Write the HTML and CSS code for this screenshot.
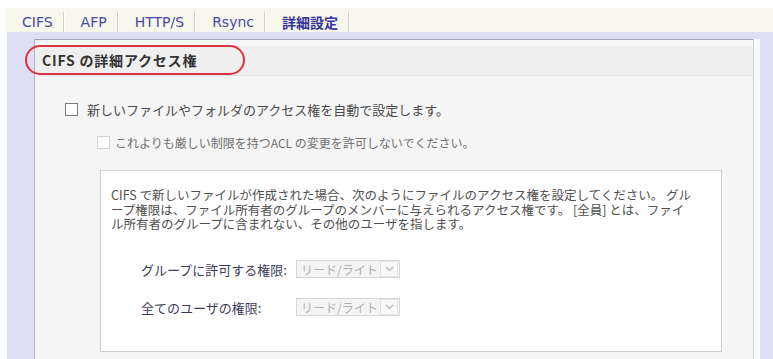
FILE: index.html
```html
<!DOCTYPE html>
<html lang="ja">
  <head>
    <meta charset="utf-8" />
    <title>CIFS の詳細アクセス権</title>
    <link rel="stylesheet" href="styles.css">
  </head>
  <body>
    <div class="tabs">
      <span class="tab">CIFS</span>
      <span class="tab">AFP</span>
      <span class="tab">HTTP/S</span>
      <span class="tab">Rsync</span>
      <span class="tab tab-active">詳細設定</span>
    </div>

    <div class="frame">
      <div class="panel">
        <div class="panel-title">CIFS の詳細アクセス権</div>

        <div class="panel-body">
          <label class="check-row">
            <input type="checkbox" class="check" />
            新しいファイルやフォルダのアクセス権を自動で設定します。
          </label>
          <label class="check-row check-sub">
            <input type="checkbox" class="check" disabled />
            これよりも厳しい制限を持つACL の変更を許可しないでください。
          </label>

          <div class="info-box">
            <p class="info-text">
              CIFS で新しいファイルが作成された場合、次のようにファイルのアクセス権を設定してください。 グル<br />
              ープ権限は、ファイル所有者のグループのメンバーに与えられるアクセス権です。 [全員] とは、ファイ<br />
              ル所有者のグループに含まれない、その他のユーザを指します。
            </p>

            <div class="perm-row">
              <span class="perm-label">グループに許可する権限:</span>
              <span class="select">
                <span class="select-text">リード/ライト</span>
                <span class="select-arrow">
                  <svg width="9" height="6" viewBox="0 0 9 6"><path d="M1 1 L4.5 4.5 L8 1" fill="none" stroke="#b8b8b8" stroke-width="1.4"/></svg>
                </span>
              </span>
            </div>
            <div class="perm-row">
              <span class="perm-label">全てのユーザの権限:</span>
              <span class="select">
                <span class="select-text">リード/ライト</span>
                <span class="select-arrow">
                  <svg width="9" height="6" viewBox="0 0 9 6"><path d="M1 1 L4.5 4.5 L8 1" fill="none" stroke="#b8b8b8" stroke-width="1.4"/></svg>
                </span>
              </span>
            </div>
          </div>
        </div>
      </div>

      <!-- 赤い丸の注釈 -->
      <div class="mark"></div>
    </div>
  </body>
</html>
```

FILE: styles.css
```css
/* 全体 */
body {
  margin: 0;
  background-color: #fff;
  font-family: "Noto Sans CJK JP", "Noto Sans", sans-serif;
  font-size: 13px;
  color: #4a4a4a;
}

/* タブ */
.tabs {
  display: flex;
  align-items: flex-end;
  height: 24px;
  margin: 8px 0 0 5px;
  background-color: #f7f7ec;
}

.tab {
  height: 20px;
  line-height: 20px;
  padding: 0 10px 0 17px;
  font-family: "DejaVu Sans", sans-serif;
  font-size: 14px;
  color: #4848a8;
  border-right: 1px solid #cfcfcf;
  box-shadow: 1px 0 0 #fff;
}

.tab-active {
  font-family: "Noto Sans CJK JP", sans-serif;
  font-weight: bold;
  color: #35359c;
}

/* 枠 */
.frame {
  position: relative;
  margin-left: 7px;
  padding: 7px 19px 0 27px;
  background-color: #dedef7;
}

.panel {
  background-color: #f5f5f5;
  border-top: 1px solid #a4a4b6;
  border-left: 1px solid #b4b4c0;
  border-right: 1px solid #d4d4d4;
  box-shadow: 6px 0 0 #fafafd;
}

.panel-title {
  height: 29px;
  line-height: 29px;
  padding-left: 7px;
  border-top: 6px solid #f8f8f8;
  border-bottom: 1px solid #e2e2e2;
  background-color: #efefef;
  font-size: 14px;
  font-weight: bold;
  letter-spacing: 0.8px;
  color: #333;
}

.panel-body {
  padding: 26px 0 20px 30px;
}

.check-row {
  display: flex;
  align-items: center;
  gap: 9px;
  line-height: 15px;
}

.check {
  appearance: none;
  width: 13px;
  height: 13px;
  margin: 0;
  background-color: #fff;
  border: 1px solid #7c7c7c;
}

.check-sub {
  margin: 18px 0 0 32px;
  gap: 5px;
  font-size: 12px;
  color: #707070;
}

.check-sub .check {
  border-color: #d2d2d2;
}

/* 説明ボックス */
.info-box {
  width: 620px;
  height: 180px;
  margin: 20px 0 0 35px;
  background-color: #fff;
  border: 1px solid #cfcfcf;
}

.info-text {
  margin: 17px 0 0 10px;
  font-size: 12.5px;
  line-height: 14.5px;
  color: #505050;
}

.perm-row {
  display: flex;
  align-items: center;
  margin: 28px 0 0 40px;
}

.perm-row + .perm-row {
  margin-top: 19px;
}

.perm-label {
  width: 155px;
  color: #3c3c5a;
}

.select {
  display: flex;
  align-items: center;
  width: 102px;
  height: 16px;
  background-color: #f4f4f4;
  border: 1px solid #d6d6d6;
  font-size: 12px;
  color: #b0b0b0;
}

.select-text {
  flex: 1;
  padding-left: 4px;
}

.select-arrow {
  display: flex;
  align-items: center;
  justify-content: center;
  width: 16px;
  height: 14px;
  margin-right: 1px;
  border: 1px solid #e2e2e2;
  background-color: #f8f8f8;
}

/* 注釈の赤丸 */
.mark {
  position: absolute;
  left: 18px;
  top: 13px;
  width: 216px;
  height: 26px;
  border: 2px solid #d8353c;
  border-radius: 16px;
}
```
